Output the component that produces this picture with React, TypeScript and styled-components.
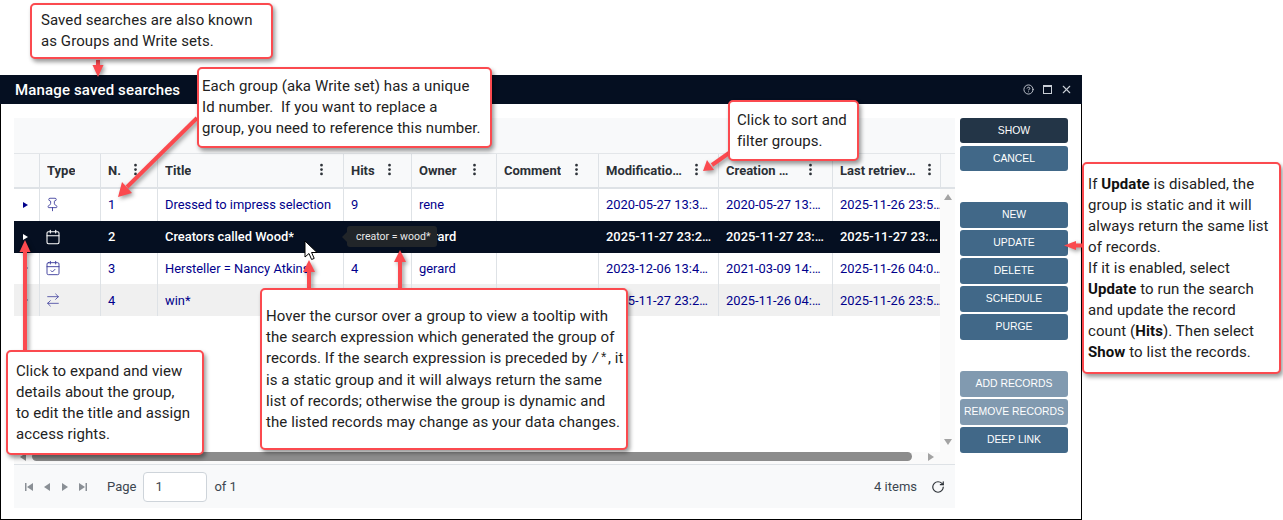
import React from 'react';
import styled, { createGlobalStyle } from 'styled-components';
import { ArrowRightLeft, Calendar, CalendarCheck, CircleHelp, EllipsisVertical, Pin, RotateCw, X } from 'lucide-react';

const GlobalStyle = createGlobalStyle`
  html, body {
    margin: 0;
    padding: 0;
    background: #fff;
  }
  * {
    box-sizing: border-box;
  }
`;

const RED = '#fb4a4f';

const Page = styled.div`
  position: relative;
  width: 1283px;
  height: 520px;
  padding-top: 75px;
  overflow: hidden;
  font-family: Roboto, sans-serif;
`;

const Window = styled.div`
  width: 1082px;
  height: 445px;
  border: 1px solid #000;
  border-top: 0;
  display: flex;
  flex-direction: column;
`;

const TitleBar = styled.div`
  height: 29px;
  margin: 0 -1px;
  padding: 0 9px 0 15px;
  background: #050f21;
  color: #fff;
  display: flex;
  align-items: center;
  justify-content: space-between;
`;

const Title = styled.div`
  font-size: 15px;
  font-weight: 500;
  letter-spacing: 0.15px;
`;

const WindowTools = styled.div`
  display: flex;
  align-items: center;
  gap: 8.5px;
  color: #c9ced6;
`;

const MaxIcon = styled.span`
  display: block;
  width: 9px;
  height: 9px;
  border: 1px solid #c9ced6;
  border-top-width: 2px;
`;

const Body = styled.div`
  flex: 1;
  min-height: 0;
  padding: 14px 13px 11px;
  display: flex;
  gap: 5px;
`;

const Panel = styled.div`
  width: 941px;
  display: flex;
  flex-direction: column;
  background: #fff;
`;

const Toolbar = styled.div`
  height: 36px;
  background: #f8f9fa;
  border-bottom: 1px solid #e3e6e9;
`;

const COLUMNS = '25px 61px 57px 186px 68px 85px 102px 120px 114px 108px';

const HeaderRow = styled.div`
  height: 35px;
  display: grid;
  grid-template-columns: ${COLUMNS} 15px;
  background: #f8f9fa;
  border-bottom: 2px solid #dee2e6;
`;

const HeaderCell = styled.div`
  min-width: 0;
  padding: 0 0 0 7px;
  display: flex;
  align-items: center;
  justify-content: space-between;
  border-left: 1px solid #dee2e6;
  color: #2b3036;
  font-size: 13px;
  font-weight: 700;
  &:first-child {
    border-left: 0;
  }
`;

const HeaderLabel = styled.span<{ $max?: number }>`
  overflow: hidden;
  white-space: nowrap;
  text-overflow: ellipsis;
  max-width: ${(p) => (p.$max ? `${p.$max}px` : 'none')};
`;

const HeaderMenu = styled.span<{ $last?: boolean }>`
  flex: none;
  width: ${(p) => (p.$last ? 22 : 28)}px;
  margin-left: auto;
  margin-right: ${(p) => (p.$last ? 0 : 8)}px;
  display: flex;
  justify-content: center;
  color: #2b3036;
  transform: translateY(-1px);
`;

const TableBody = styled.div`
  flex: 1;
  min-height: 0;
  display: flex;
`;

const Rows = styled.div`
  width: 926px;
`;

const Row = styled.div<{ $selected?: boolean; $striped?: boolean }>`
  height: 31.75px;
  display: grid;
  grid-template-columns: ${COLUMNS};
  align-items: stretch;
  background: ${(p) => (p.$selected ? '#050f21' : p.$striped ? '#f0f0f0' : '#fff')};
  color: ${(p) => (p.$selected ? '#fff' : '#00008b')};
  font-size: 12.9px;
  font-weight: ${(p) => (p.$selected ? 500 : 400)};
`;

const Cell = styled.div<{ $selected?: boolean }>`
  min-width: 0;
  padding: 0 5px 0 7px;
  display: flex;
  align-items: center;
  border-left: 1px solid ${(p) => (p.$selected ? '#050f21' : '#dee2e6')};
  &:first-child {
    border-left: 0;
    padding: 0 0 0 9px;
  }
  &:last-child {
    padding-right: 0;
    margin-right: -3px;
  }
`;

const IconCell = styled(Cell)<{ $selected?: boolean }>`
  padding-left: 5px;
  color: ${(p) => (p.$selected ? '#fff' : '#3d3d9c')};
`;

const CellText = styled.span`
  overflow: hidden;
  white-space: nowrap;
  text-overflow: ellipsis;
`;

const Caret = styled.span<{ $selected?: boolean }>`
  display: block;
  width: 0;
  height: 0;
  border-style: solid;
  border-width: 3.5px 0 3.5px 5px;
  border-color: transparent transparent transparent ${(p) => (p.$selected ? '#fff' : '#00008b')};
`;

const VScroll = styled.div`
  flex: 1;
  padding: 5px 0 7px;
  display: flex;
  flex-direction: column;
  align-items: center;
  justify-content: space-between;
  background: #fafafa;
`;

const ScrollUp = styled.span`
  width: 0;
  height: 0;
  border-style: solid;
  border-width: 0 4.5px 6px;
  border-color: transparent transparent #a3a3a3;
`;

const ScrollDown = styled.span`
  width: 0;
  height: 0;
  border-style: solid;
  border-width: 6px 4.5px 0;
  border-color: #a3a3a3 transparent transparent;
`;

const HScroll = styled.div`
  height: 12px;
  padding: 0 21px 3px 6px;
  display: flex;
  align-items: center;
  background: #fafafa;
`;

const ScrollLeft = styled.span`
  width: 0;
  height: 0;
  margin-right: 6px;
  border-style: solid;
  border-width: 4.5px 6px 4.5px 0;
  border-color: transparent #8c8c8c transparent transparent;
`;

const ScrollThumb = styled.span`
  width: 880px;
  height: 9px;
  margin-right: 16px;
  border-radius: 5px;
  background: #8c8c8c;
`;

const ScrollRight = styled.span`
  width: 0;
  height: 0;
  border-style: solid;
  border-width: 4.5px 0 4.5px 6px;
  border-color: transparent transparent transparent #a3a3a3;
`;

const Footer = styled.div`
  height: 44px;
  padding: 0 10px;
  display: flex;
  align-items: center;
  background: #f8f9fa;
  border-top: 1px solid #dee2e6;
  color: #3c4650;
  font-size: 13px;
`;

const Pager = styled.div`
  display: flex;
  align-items: center;
  color: #8a8f95;
  gap: 8px;
  margin-right: 19px;
`;

const PageInput = styled.div`
  width: 64px;
  height: 30px;
  margin: 0 7px;
  padding-left: 11px;
  display: flex;
  align-items: center;
  background: #fff;
  border: 1px solid #ced4da;
  border-radius: 4px;
`;

const Items = styled.div`
  margin-left: auto;
  margin-right: 14px;
`;

const Side = styled.div`
  width: 108px;
  display: flex;
  flex-direction: column;
  gap: 31px;
`;

const ButtonGroup = styled.div<{ $tight?: boolean }>`
  display: flex;
  flex-direction: column;
  gap: ${(p) => (p.$tight ? 3 : 2)}px;
`;

const SideButton = styled.div<{ $variant?: 'primary' | 'disabled'; $short?: boolean }>`
  height: ${(p) => (p.$short ? 25 : 26)}px;
  padding-bottom: ${(p) => (p.$short ? 1 : 2)}px;
  display: flex;
  align-items: center;
  justify-content: center;
  border-radius: 3px;
  color: #fff;
  font-family: 'Liberation Sans', Arial, sans-serif;
  font-size: 10.4px;
  background: ${(p) => (p.$variant === 'primary' ? '#233547' : p.$variant === 'disabled' ? '#819ab0' : '#416888')};
`;

const Tooltip = styled.div`
  position: absolute;
  left: 347px;
  top: 226px;
  width: 90px;
  height: 21px;
  padding-left: 9px;
  display: flex;
  align-items: center;
  border-radius: 3px;
  background: #212529;
  color: #e8e8e8;
  font-size: 10.5px;
  white-space: nowrap;
  &::before {
    content: '';
    position: absolute;
    left: -5px;
    top: 6px;
    border-style: solid;
    border-width: 5px 5px 5px 0;
    border-color: transparent #212529 transparent transparent;
  }
`;

const Cursor = styled.svg`
  position: absolute;
  left: 304px;
  top: 240px;
`;

const ArrowLayer = styled.svg`
  position: absolute;
  left: 0;
  top: 0;
  filter: drop-shadow(2px 2px 2px rgba(0, 0, 0, 0.4));
`;

const Callout = styled.div<{ $x: number; $y: number; $w: number; $h: number; $pad: number }>`
  position: absolute;
  left: ${(p) => p.$x}px;
  top: ${(p) => p.$y}px;
  width: ${(p) => p.$w}px;
  height: ${(p) => p.$h}px;
  padding-left: ${(p) => p.$pad}px;
  display: flex;
  flex-direction: column;
  justify-content: center;
  background: #fff;
  border: 2px solid ${RED};
  border-radius: 5px;
  box-shadow: 2px 3px 4px rgba(0, 0, 0, 0.4);
  color: #222;
  font-family: Roboto, 'Liberation Sans', sans-serif;
  font-size: 15px;
  letter-spacing: 0.08px;
  line-height: 21px;
  white-space: nowrap;
  b {
    font-weight: 700;
    color: #111;
  }
`;

const Code = styled.span`
  font-family: 'Liberation Mono', monospace;
  font-size: 14px;
`;

const ARROWS = [
  { x1: 98, y1: 60, x2: 98, y2: 66, head: '92.5,65 103.5,65 98,77' },
  { x1: 197, y1: 118, x2: 127, y2: 187, head: '132,193 122,182 118,197' },
  { x1: 729, y1: 153, x2: 712, y2: 165, head: '714,170 707,160 703,171' },
  { x1: 400, y1: 288, x2: 400, y2: 262, head: '394,262 406,262 400,250' },
  { x1: 309, y1: 288, x2: 309, y2: 272, head: '303,272 315,272 309,260' },
  { x1: 25, y1: 350, x2: 25, y2: 252, head: '19.5,252 30.5,252 25,240' },
  { x1: 1083, y1: 245.5, x2: 1075, y2: 245.5, head: '1076,241 1076,250 1064,245.5' },
];

const COLUMN_TITLES = [
  { title: 'Type' },
  { title: 'N.' },
  { title: 'Title' },
  { title: 'Hits' },
  { title: 'Owner' },
  { title: 'Comment' },
  { title: 'Modification date' },
  { title: 'Creation date', max: 66 },
  { title: 'Last retrieved' },
];

const GROUPS = [
  {
    icon: <Pin size={15} strokeWidth={1.4} />,
    no: '1',
    title: 'Dressed to impress selection',
    hits: '9',
    owner: 'rene',
    dates: ['2020-05-27 13:30:14', '2020-05-27 13:30:14', '2025-11-26 23:50:02'],
  },
  {
    icon: <Calendar size={16} strokeWidth={1.6} />,
    no: '2',
    title: 'Creators called Wood*',
    hits: '',
    owner: 'gerard',
    dates: ['2025-11-27 23:22:41', '2025-11-27 23:22:41', '2025-11-27 23:22:41'],
    selected: true,
  },
  {
    icon: <CalendarCheck size={16} strokeWidth={1.4} />,
    no: '3',
    title: 'Hersteller = Nancy Atkins',
    hits: '4',
    owner: 'gerard',
    dates: ['2023-12-06 13:41:09', '2021-03-09 14:12:33', '2025-11-26 04:02:18'],
  },
  {
    icon: <ArrowRightLeft size={16} strokeWidth={1.2} />,
    no: '4',
    title: 'win*',
    hits: '',
    owner: '',
    dates: ['2025-11-27 23:24:50', '2025-11-26 04:10:27', '2025-11-26 23:50:02'],
    striped: true,
  },
];

const PagerIcon: React.FC<{ d: string; bar?: number }> = ({ d, bar }) => (
  <svg width="10" height="10" viewBox="0 0 10 10" fill="currentColor">
    <path d={d} />
    {bar !== undefined && <rect x={bar} y="1" width="1.5" height="8" />}
  </svg>
);

const App: React.FC = () => {
  return (
    <Page>
      <GlobalStyle />
      <Window>
        <TitleBar>
          <Title>Manage saved searches</Title>
          <WindowTools>
            <CircleHelp size={11} strokeWidth={2} />
            <MaxIcon />
            <X size={13} strokeWidth={2} />
          </WindowTools>
        </TitleBar>
        <Body>
          <Panel>
            <Toolbar />
            <HeaderRow>
              <HeaderCell />
              {COLUMN_TITLES.map((column, i) => (
                <HeaderCell key={column.title}>
                  <HeaderLabel $max={column.max}>{column.title}</HeaderLabel>
                  {i > 0 && (
                    <HeaderMenu $last={i === COLUMN_TITLES.length - 1}>
                      <EllipsisVertical size={15} strokeWidth={2.4} />
                    </HeaderMenu>
                  )}
                </HeaderCell>
              ))}
              <HeaderCell />
            </HeaderRow>
            <TableBody>
              <Rows>
                {GROUPS.map((group) => (
                  <Row key={group.no} $selected={group.selected} $striped={group.striped}>
                    <Cell $selected={group.selected}>
                      <Caret $selected={group.selected} />
                    </Cell>
                    <IconCell $selected={group.selected}>{group.icon}</IconCell>
                    <Cell $selected={group.selected}>{group.no}</Cell>
                    <Cell $selected={group.selected}>
                      <CellText>{group.title}</CellText>
                    </Cell>
                    <Cell $selected={group.selected}>{group.hits}</Cell>
                    <Cell $selected={group.selected}>{group.owner}</Cell>
                    <Cell $selected={group.selected} />
                    {group.dates.map((date, i) => (
                      <Cell key={i} $selected={group.selected}>
                        <CellText>{date}</CellText>
                      </Cell>
                    ))}
                  </Row>
                ))}
              </Rows>
              <VScroll>
                <ScrollUp />
                <ScrollDown />
              </VScroll>
            </TableBody>
            <HScroll>
              <ScrollLeft />
              <ScrollThumb />
              <ScrollRight />
            </HScroll>
            <Footer>
              <Pager>
                <PagerIcon d="M9 1v8L3 5z" bar={1} />
                <PagerIcon d="M8 1v8L2 5z" />
                <PagerIcon d="M2 1v8l6-4z" />
                <PagerIcon d="M1 1v8l6-4z" bar={7.5} />
              </Pager>
              Page
              <PageInput>1</PageInput>
              of 1
              <Items>4 items</Items>
              <RotateCw size={14} strokeWidth={2} color="#2b3036" />
            </Footer>
          </Panel>
          <Side>
            <ButtonGroup $tight>
              <SideButton $variant="primary" $short>SHOW</SideButton>
              <SideButton $short>CANCEL</SideButton>
            </ButtonGroup>
            <ButtonGroup>
              <SideButton>NEW</SideButton>
              <SideButton>UPDATE</SideButton>
              <SideButton>DELETE</SideButton>
              <SideButton>SCHEDULE</SideButton>
              <SideButton>PURGE</SideButton>
            </ButtonGroup>
            <ButtonGroup>
              <SideButton $variant="disabled">ADD RECORDS</SideButton>
              <SideButton $variant="disabled">REMOVE RECORDS</SideButton>
              <SideButton>DEEP LINK</SideButton>
            </ButtonGroup>
          </Side>
        </Body>
      </Window>

      <Tooltip>creator = wood*</Tooltip>
      <Cursor width="14" height="22" viewBox="0 0 14 22">
        <path d="M1 1v16l4-3.5 2.6 6 2.6-1.1-2.6-5.9H13z" fill="#fff" stroke="#000" strokeWidth="1" />
      </Cursor>

      <ArrowLayer width="1283" height="520">
        {ARROWS.map((a) => (
          <g key={a.head}>
            <line x1={a.x1} y1={a.y1} x2={a.x2} y2={a.y2} stroke={RED} strokeWidth="4" />
            <polygon points={a.head} fill={RED} />
          </g>
        ))}
      </ArrowLayer>

      <Callout $x={30} $y={3} $w={243} $h={56} $pad={9}>
        Saved searches are also known
        <br />
        as Groups and Write sets.
      </Callout>
      <Callout $x={197} $y={67} $w={295} $h={81} $pad={3}>
        Each group (aka Write set) has a unique
        <br />
        Id number.&nbsp; If you want to replace a
        <br />
        group, you need to reference this number.
      </Callout>
      <Callout $x={728} $y={100} $w={131} $h={61} $pad={7}>
        Click to sort and
        <br />
        filter groups.
      </Callout>
      <Callout $x={260} $y={288} $w={368} $h={162} $pad={4}>
        Hover the cursor over a group to view a tooltip with
        <br />
        the search expression which generated the group of
        <br />
        <span>
          records. If the search expression is preceded by <Code>/*</Code>, it
        </span>
        is a static group and it will always return the same
        <br />
        list of records; otherwise the group is dynamic and
        <br />
        the listed records may change as your data changes.
      </Callout>
      <Callout $x={6} $y={350} $w={198} $h={105} $pad={8}>
        Click to expand and view
        <br />
        details about the group,
        <br />
        to edit the title and assign
        <br />
        access rights.
      </Callout>
      <Callout $x={1082} $y={162} $w={199} $h={212} $pad={4}>
        <span>
          If <b>Update</b> is disabled, the
        </span>
        group is static and it will
        <br />
        always return the same list
        <br />
        of records.
        <br />
        If it is enabled, select
        <br />
        <span>
          <b>Update</b> to run the search
        </span>
        and update the record
        <br />
        <span>
          count (<b>Hits</b>). Then select
        </span>
        <span>
          <b>Show</b> to list the records.
        </span>
      </Callout>
    </Page>
  );
};

export default App;
